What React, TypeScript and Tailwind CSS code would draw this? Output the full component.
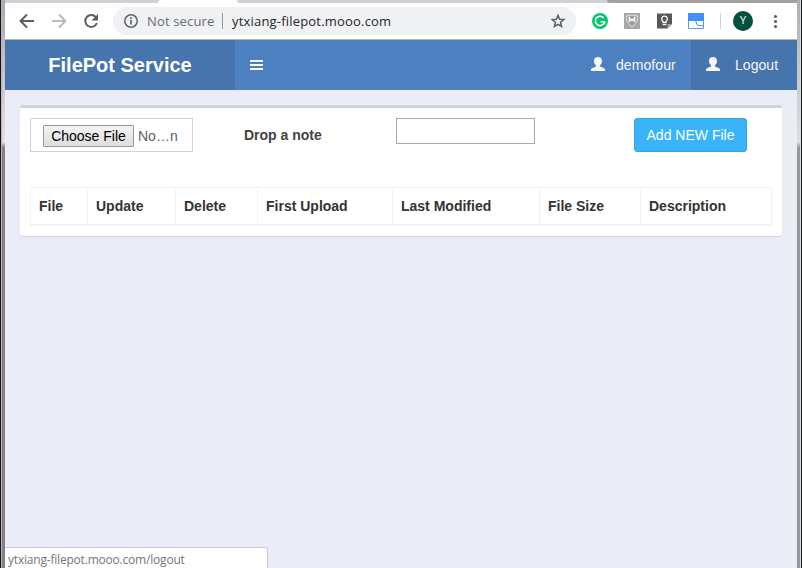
import React from "react";

const columns = [
  { label: "File", width: "w-[57px]" },
  { label: "Update", width: "w-[88px]" },
  { label: "Delete", width: "w-[82px]" },
  { label: "First Upload", width: "w-[135px]" },
  { label: "Last Modified", width: "w-[147px]" },
  { label: "File Size", width: "w-[101px]" },
  { label: "Description", width: "w-[131px]" },
];

function UserIcon() {
  return (
    <svg width="16" height="16" viewBox="0 0 16 16" fill="#f6f6f6" className="-mt-[2px] shrink-0">
      <path d="M8 1C5.300 1 4 2.600 4 5c0 1.800.8 3.200 1.900 4.200v1c-.3.7-1.200 1-2.300 1.400C1.700 12.300.9 12.900.9 14v1h14.200v-1c0-1.100-.8-1.700-2.700-2.400-1.100-.4-2-.7-2.300-1.400v-1C11.200 8.200 12 6.800 12 5c0-2.400-1.300-4-4-4z" />
    </svg>
  );
}

function BrowserBar() {
  return (
    <div className="flex h-9 items-center bg-white font-['Open_Sans','Noto_Sans',sans-serif]">
      <svg width="108" height="36" viewBox="0 0 108 36" fill="none" strokeWidth="2" className="shrink-0">
        <path d="M29 18H16M22 11.500L15.500 18l6.500 6.500" stroke="#5a5d62" />
        <path d="M47 18h13M54 11.500l6.500 6.500-6.500 6.500" stroke="#b9bbbe" />
        <path d="M91.200 14.500A6 6 0 1 0 91.900 20" stroke="#5a5d62" />
        <path d="M93 11v6.500h-6.500z" fill="#5a5d62" />
      </svg>
      <div className="flex h-7 w-[463px] shrink-0 items-center rounded-full bg-[#f0f1f3] pl-[10px]">
        <svg width="16" height="16" viewBox="0 0 16 16" fill="none" stroke="#606368" className="shrink-0">
          <circle cx="8" cy="8" r="6.200" strokeWidth="1.500" />
          <path d="M8 7v4.500M8 4.300v1.700" strokeWidth="1.700" />
        </svg>
        <span className="ml-2 w-[67px] whitespace-nowrap text-[13px] leading-7 tracking-[0.15px] text-[#696c71]">Not secure</span>
        <span className="ml-2 h-4 w-px bg-[#96999d]" />
        <span className="ml-[9px] flex-1 whitespace-nowrap text-[13px] leading-7 tracking-[0.19px] text-[#26272a]">ytxiang-filepot.mooo.com</span>
        <svg width="16" height="16" viewBox="0 0 16 16" fill="none" stroke="#5c6066" strokeWidth="1.500" className="mr-[10px] shrink-0">
          <path d="M8 2.200l1.600 4 4.200.3-3.200 2.800 1 4.200L8 11.300l-3.600 2.200 1-4.200-3.200-2.800 4.200-.3z" />
        </svg>
      </div>
      <svg width="16" height="16" viewBox="0 0 16 16" fill="none" className="ml-4 shrink-0">
        <circle cx="8" cy="8" r="8" fill="#06c66b" />
        <path d="M11.600 5A4.600 4.600 0 1 0 12.300 9.500M8.500 8.700h4v2.500" stroke="#fff" strokeWidth="1.500" />
      </svg>
      <svg width="16" height="16" viewBox="0 0 16 16" fill="none" className="ml-4 shrink-0">
        <path d="M0 0h16v16H0z" fill="#a8a8a8" />
        <path d="M2.700 3L8 2l5.300 1v5.500L8 13.700 2.700 8.500z" fill="#999" stroke="#e4e4e4" />
        <path d="M5.500 9V5L8 7.300 10.500 5v4" stroke="#fff" strokeWidth="1.700" />
      </svg>
      <svg width="16" height="16" viewBox="0 0 16 16" fill="none" className="ml-[17px] shrink-0">
        <path d="M0 .5h15V11l-4.500 4.500H0z" fill="#57585a" />
        <path d="M15 11l-4.500 4.500V11z" fill="#a3a4a5" />
        <path d="M6 9.500V8.300C3.500 6.500 4.600 3.200 7.500 3.200s4 3.300 1.500 5.100v1.200zM5.700 11.600h3.600" stroke="#fff" strokeWidth="1.300" />
      </svg>
      <svg width="16" height="16" viewBox="0 0 16 16" fill="none" className="ml-[15px] shrink-0">
        <path d="M.5.500h15v15H.5z" fill="#fff" stroke="#5598f6" />
        <path d="M0 0h16v8H0z" fill="#438ff8" />
        <path d="M7 7.500c2 .5 1 5 3.500 5H15" stroke="#5598f6" strokeWidth="1.200" />
      </svg>
      <span className="ml-4 h-4 w-px bg-[#cfd0d2]" />
      <span className="ml-3 flex size-5 items-center justify-center rounded-full bg-[#01513f] font-['Roboto',sans-serif] text-[11px] text-[#e2eee9]">Y</span>
      <svg width="6" height="16" viewBox="0 0 6 16" fill="#5c5e63" className="ml-[20px] shrink-0">
        <circle cx="2.500" cy="3.500" r="1.600" />
        <circle cx="2.500" cy="8.500" r="1.600" />
        <circle cx="2.500" cy="13.500" r="1.600" />
      </svg>
    </div>
  );
}

function Header() {
  return (
    <header className="flex h-[50px] bg-[#4d80c1] text-sm text-[#f6f6f6]">
      <div className="flex w-[230px] items-center justify-center bg-[#4674ad] text-xl font-bold text-white">FilePot Service</div>
      <div className="flex flex-1 items-center pl-[15px]">
        <div className="flex w-[12.500px] flex-col gap-[2px]">
          <span className="h-[2px] bg-white" />
          <span className="h-[2px] bg-white" />
          <span className="h-[2px] bg-white" />
        </div>
      </div>
      <div className="flex w-[116px] items-center pl-[15px]">
        <UserIcon />
        <span className="ml-[10px] tracking-[0.08px]">demofour</span>
      </div>
      <div className="flex w-[106px] items-center bg-[#4674ad] pl-[14px]">
        <UserIcon />
        <span className="ml-[14px] tracking-[0.05px]">Logout</span>
      </div>
    </header>
  );
}

function FileCard() {
  return (
    <section className="h-[131px] w-[762px] rounded-[3px] border-t-[3px] border-[#d2d2df] bg-white px-[10px] pt-[10px] shadow-[0_1px_1px_rgba(0,0,0,0.1)]">
      <form className="flex items-start">
        <div className="flex h-[34px] w-[163px] items-center border border-[#d2d1df] pt-[2px] pl-3">
          <button type="button" className="h-[22px] w-[91px] whitespace-nowrap rounded-[1px] border border-[#999] bg-linear-to-b from-[#f4f4f4] to-[#dddddd] text-sm leading-5 text-black">Choose File</button>
          <span className="ml-1 text-sm text-[#5c6268]">No…n</span>
        </div>
        <label className="ml-[51px] w-[152px] pt-[7px] text-sm font-bold text-[#434343]">Drop a note</label>
        <input className="h-[26px] w-[139px] border border-[#a9a9a9] bg-white" aria-label="Note" />
        <button type="button" className="ml-[99px] h-[34px] w-[113px] whitespace-nowrap rounded-[3px] border border-[#30a6e2] bg-[#3ab4f9] text-sm text-white">Add NEW File</button>
      </form>
      <table className="mt-[35px] w-[742px] table-fixed border-separate border-spacing-0 border-l border-t border-[#f3f3f4]">
        <thead>
          <tr>
            {columns.map((column) => (
              <th key={column.label} className={`${column.width} h-[38px] border-r border-b-2 border-[#f3f3f4] px-2 text-left text-sm font-bold text-[#333]`}>
                {column.label}
              </th>
            ))}
          </tr>
        </thead>
      </table>
    </section>
  );
}

export default function App() {
  return (
    <div className="flex h-[568px] w-[802px] overflow-hidden bg-[#eaedf6] font-['Liberation_Sans',Arial,sans-serif]">
      <div className="w-px bg-[#151316]" />
      <div className="w-px bg-[#b9b6bc]" />
      <div className="w-[3px] bg-linear-to-b from-[#aaa7b2] from-0% via-[#e5dfe2] via-25% to-[#858087] to-26%" />
      <main className="relative flex w-[792px] flex-col">
        <div className="flex h-[3px] bg-[#d0cfd7]">
          <div className="ml-[153px] w-20 rounded-t-[3px] bg-white" />
          <div className="ml-auto w-[190px] rounded-bl-[3px] bg-[#a3a19e]" />
        </div>
        <BrowserBar />
        <div className="h-px bg-[#b4b4b4]" />
        <Header />
        <div className="flex-1 p-[15px]">
          <FileCard />
        </div>
        <div className="absolute bottom-0 left-0 h-[21px] w-[263px] rounded-tr-[3px] border-t border-r border-[#c8cbd6] bg-white pl-[3px] font-['Open_Sans','Noto_Sans',sans-serif] text-xs leading-[23px] tracking-[-0.2px] text-[#74767a]">ytxiang-filepot.mooo.com/logout</div>
      </main>
      <div className="w-[3px] bg-linear-to-b from-[#aeb0b0] from-0% via-[#dedfe0] via-25% to-[#969999] to-26%" />
      <div className="w-px bg-[#d5d9dc]" />
      <div className="w-px bg-[#17191e]" />
    </div>
  );
}
